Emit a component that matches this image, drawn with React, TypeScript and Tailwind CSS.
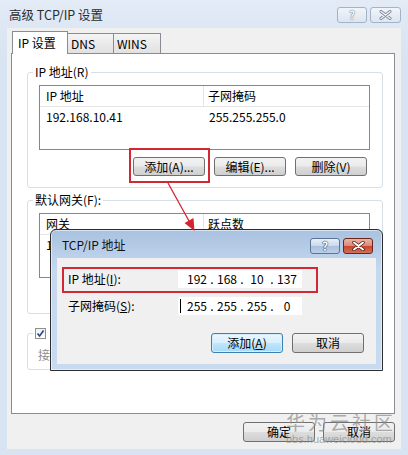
import React from "react";

const btnBase =
  "flex w-[72px] items-center justify-center rounded-[3px] border text-[12px] leading-none text-black";
const btnNormal =
  "border-[#707070] bg-[linear-gradient(#f2f2f2_0%,#ebebeb_48%,#dddddd_52%,#cfcfcf_100%)]";
const btnFocused =
  "border-[#3c7fb1] bg-[linear-gradient(#eaf6fd_0%,#d9f0fc_48%,#bee6fd_52%,#a7d9f5_100%)] shadow-[inset_0_0_0_1px_#d6eefb]";

function WinButton({
  children,
  focused = false,
  tall = true,
}: {
  children: React.ReactNode;
  focused?: boolean;
  tall?: boolean;
}) {
  return (
    <div className={`${btnBase} ${tall ? "h-[20px]" : "h-[19px]"} ${focused ? btnFocused : btnNormal}`}>
      {children}
    </div>
  );
}

function ListBox({ cols, rows }: { cols: [string, string]; rows: [string, string][] }) {
  return (
    <div className="h-[65px] w-[331px] border border-[#828790] bg-white text-[12px]">
      <div className="flex h-[21px] border-b border-[#e5e5e5] leading-[20px]">
        <div className="w-[164px] border-r border-[#e5e5e5] pl-[6px]">{cols[0]}</div>
        <div className="pl-[4px]">{cols[1]}</div>
      </div>
      {rows.map(([a, b]) => (
        <div key={a} className="flex h-[20px] leading-[20px]">
          <div className="w-[165px] pl-[6px]">{a}</div>
          <div className="pl-[4px]">{b}</div>
        </div>
      ))}
    </div>
  );
}

function GroupBox({
  label,
  className,
  children,
}: {
  label: React.ReactNode;
  className: string;
  children?: React.ReactNode;
}) {
  return (
    <div className={`relative rounded-[3px] border border-[#d5dfe5] ${className}`}>
      <span className="absolute -top-[8px] left-[5px] flex items-center bg-white px-[2px] text-[12px] leading-[14px]">
        {label}
      </span>
      {children}
    </div>
  );
}

function ListButtons() {
  return (
    <div className="mt-[7px] flex w-[328px] justify-end gap-[9px]">
      <WinButton tall={false}>添加(A)...</WinButton>
      <WinButton tall={false}>编辑(E)...</WinButton>
      <WinButton tall={false}>删除(V)</WinButton>
    </div>
  );
}

function IpField({ parts, caret = false }: { parts: string[]; caret?: boolean }) {
  return (
    <div className="flex h-[18px] w-[124px] items-center bg-white text-[12px] leading-none">
      {caret ? (
        <>
          <span className="w-[2px]" />
          <span className="h-[14px] w-[1px] bg-black" />
          <span className="w-[5px]" />
        </>
      ) : (
        <span className="w-[8px]" />
      )}
      {parts.map((p, i) => (
        <React.Fragment key={i}>
          {i > 0 && <span className="w-[8px] text-center">.</span>}
          <span className="w-[22px] text-center">{p}</span>
        </React.Fragment>
      ))}
    </div>
  );
}

function DialogCaption() {
  return (
    <div className="mt-[8px] flex gap-[3px]">
      <div className="flex h-[16px] w-[30px] items-center justify-center rounded-[3px] border border-[#5c7394] bg-[linear-gradient(#e8eff8_0%,#cbd9ec_48%,#abc0dd_52%,#bccfe7_100%)]">
        <span className="text-[12px] font-bold leading-none text-white [text-shadow:0_0_1px_#2e4260,0_0_1px_#2e4260,0_0_1px_#2e4260]">
          ?
        </span>
      </div>
      <div className="flex h-[16px] w-[30px] items-center justify-center rounded-[3px] border border-[#6b2418] bg-[linear-gradient(#ebb3a6_0%,#dc8a76_48%,#c5472e_52%,#d66f58_100%)]">
        <svg width="13" height="10" viewBox="0 0 13 10">
          <path d="M2 1.5 L11 8.5 M11 1.5 L2 8.5" stroke="#3a1a14" strokeWidth="3.4" strokeLinecap="round" />
          <path d="M2 1.5 L11 8.5 M11 1.5 L2 8.5" stroke="#ffffff" strokeWidth="2" strokeLinecap="round" />
        </svg>
      </div>
    </div>
  );
}

export default function App() {
  return (
    <div className="relative h-[455px] w-[408px] overflow-hidden bg-[linear-gradient(#e2ebf6,#d8e4f2_60px,#d8e4f2)] font-['Noto_Sans_CJK_SC',sans-serif] text-[12px] text-black">
      {/* window title bar */}
      <div className="flex h-[28px] items-center justify-between pl-[9px] pr-[7px] pt-[2px]">
        <span className="text-[12.5px] leading-[16px] text-[#2b2b2b]">高级 TCP/IP 设置</span>
        <div className="flex gap-[3px]">
          <div className="flex h-[16px] w-[30px] items-center justify-center rounded-[3px] border border-[#a5b3c6] bg-[linear-gradient(#f1f5fa,#dce5f0)]">
            <span className="text-[12px] font-bold leading-none text-[#eef2f7] [text-shadow:0_0_1px_#6f7c8e,0_0_1px_#6f7c8e]">?</span>
          </div>
          <div className="flex h-[16px] w-[31px] items-center justify-center rounded-[3px] border border-[#a5b3c6] bg-[linear-gradient(#f1f5fa,#dce5f0)]">
            <svg width="13" height="10" viewBox="0 0 13 10">
              <path d="M2 1.5 L11 8.5 M11 1.5 L2 8.5" stroke="#7d8898" strokeWidth="3" strokeLinecap="round" />
              <path d="M2 1.5 L11 8.5 M11 1.5 L2 8.5" stroke="#eef2f7" strokeWidth="1.4" strokeLinecap="round" />
            </svg>
          </div>
        </div>
      </div>

      {/* client area */}
      <div className="mx-[7px] flex h-[421px] flex-col bg-[#f0f0f0] pt-[3px]">
        {/* tabs */}
        <div className="flex h-[22px] items-end pl-[5px]">
          <div className="relative z-10 -mb-px h-[23px] w-[56px] border border-b-0 border-[#898c95] bg-white pl-[5px] pt-[3px] leading-[16px]">
            IP 设置
          </div>
          <div className="h-[20px] w-[46px] border border-b-0 border-l-0 border-[#898c95] bg-[linear-gradient(#f4f4f4,#e1e1e1)] pl-[3px] pt-[2px] leading-[16px]">
            DNS
          </div>
          <div className="h-[20px] w-[47px] border border-b-0 border-l-0 border-[#898c95] bg-[linear-gradient(#f4f4f4,#e1e1e1)] pl-[3px] pt-[2px] leading-[16px]">
            WINS
          </div>
        </div>

        {/* tab page */}
        <div className="ml-[4px] flex h-[361px] w-[384px] flex-col border border-[#898c95] bg-white">
          <GroupBox label="IP 地址(R)" className="ml-[15px] mt-[18px] h-[116px] w-[356px] pl-[11px] pt-[12px]">
            <ListBox cols={["IP 地址", "子网掩码"]} rows={[["192.168.10.41", "255.255.255.0"]]} />
            <ListButtons />
          </GroupBox>

          <GroupBox label="默认网关(F):" className="ml-[15px] mt-[12px] h-[114px] w-[356px] pl-[11px] pt-[12px]">
            <ListBox cols={["网关", "跃点数"]} rows={[["192.168.10.1", "自动"]]} />
            <ListButtons />
          </GroupBox>

          <GroupBox
            label={
              <>
                <span className="mr-[4px] flex h-[11px] w-[11px] items-center justify-center border border-[#8e8f8f] bg-[linear-gradient(#f0f0f0,#ffffff)]">
                  <svg width="9" height="9" viewBox="0 0 9 9">
                    <path d="M1.5 4.5 L3.6 7 L7.6 1.6" fill="none" stroke="#2b4a8c" strokeWidth="1.7" />
                  </svg>
                </span>
                自动跃点(U)
              </>
            }
            className="ml-[15px] mt-[19px] h-[37px] w-[356px] pl-[10px] pt-[14px]"
          >
            <div className="leading-[14px] text-[#8d8d8d]">接口跃点数(N):</div>
          </GroupBox>
        </div>

        {/* dialog buttons */}
        <div className="mt-[8px] flex justify-end gap-[8px] pr-[6px]">
          <WinButton>确定</WinButton>
          <WinButton>取消</WinButton>
        </div>
      </div>

      {/* red highlight around the add button */}
      <div className="pointer-events-none absolute left-[129px] top-[148px] h-[35px] w-[81px] border-2 border-[#cf2a33]" />

      {/* TCP/IP address dialog */}
      <div className="absolute left-[50px] top-[229px] flex h-[142px] w-[333px] flex-col rounded-t-[6px] border border-[#2c2c2c] bg-[linear-gradient(#a9c2e1,#c5d8ee_40px,#c8daef)] shadow-[inset_0_0_0_1px_rgba(255,255,255,0.55)]">
        <div className="flex h-[28px] items-start justify-between pl-[11px] pr-[9px]">
          <span className="pt-[7px] text-[12px] leading-[16px] text-[#111]">TCP/IP 地址</span>
          <DialogCaption />
        </div>
        <div className="relative mx-[6px] h-[106px] bg-[#f0f0f0] pl-[11px] pt-[12px]">
          <div className="flex h-[18px] items-center">
            <span className="w-[110px] leading-none">
              IP 地址(<span className="underline">I</span>):
            </span>
            <IpField parts={["192", "168", "10", "137"]} />
          </div>
          <div className="mt-[9px] flex h-[18px] items-center">
            <span className="w-[110px] leading-none">
              子网掩码(<span className="underline">S</span>):
            </span>
            <IpField parts={["255", "255", "255", "0"]} caret />
          </div>
          <div className="mt-[18px] flex justify-end gap-[9px] pr-[12px]">
            <WinButton focused>
              添加(<span className="underline">A</span>)
            </WinButton>
            <WinButton>取消</WinButton>
          </div>
          <div className="pointer-events-none absolute left-[5px] top-[9px] h-[26px] w-[256px] border-2 border-[#cf2a33]" />
        </div>
      </div>

      {/* pointer arrow */}
      <svg className="pointer-events-none absolute left-0 top-0" width="408" height="455" viewBox="0 0 408 455">
        <line x1="168" y1="183" x2="189" y2="221" stroke="#d6232e" strokeWidth="1.3" />
        <polygon points="194.5,231 184.5,223 193.5,218" fill="#d6232e" />
      </svg>

      {/* site watermark */}
      <div className="pointer-events-none absolute left-[286px] top-[411px] flex flex-col text-[#8a8a8a]/70">
        <span className="text-[19px] leading-[22px] tracking-[3px]">华为云社区</span>
        <span className="font-['Liberation_Sans',sans-serif] text-[11px] leading-[12px]">bbs.huaweicloud.com</span>
      </div>
    </div>
  );
}
